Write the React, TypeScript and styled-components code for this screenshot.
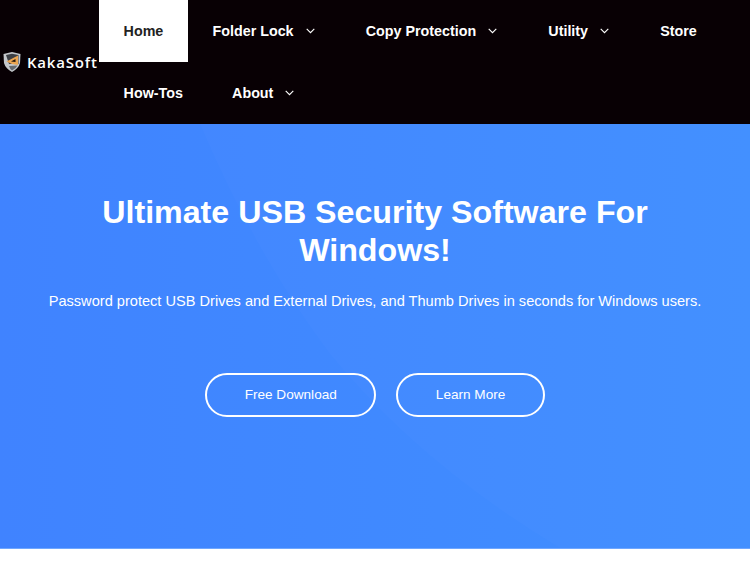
import * as React from "react";
import styled, { createGlobalStyle } from "styled-components";

const GlobalStyle = createGlobalStyle`
  html, body {
    margin: 0;
    padding: 0;
    background: #fff;
    font-family: "Liberation Sans", Arial, sans-serif;
  }
`;

const NAV_ITEMS = [
  { label: "Home", active: true },
  { label: "Folder Lock", caret: true },
  { label: "Copy Protection", caret: true },
  { label: "Utility", caret: true },
  { label: "Store" },
  { label: "How-Tos" },
  { label: "About", caret: true },
];

const Shield = () => (
  <svg width="18" height="20" viewBox="0 0 18 20">
    <path d="M9 0 L17.5 2 L17 11 Q15.5 16.5 9 20 Q2.5 16.5 1 11 L0.5 2 Z" fill="#c4c7cb" />
    <path d="M3 3 L9 1.8 L15.5 3 L15.5 12 L6 12 Z" fill="#3c3f45" />
    <path d="M15 3.5 L15 13 L9 12 L3.5 9.5 Z" fill="#eba551" />
    <path d="M12.5 7 L12.5 10 L8 9.5 Z" fill="#24160c" />
    <path d="M6 14 L14.5 13.5 Q13 16.5 9 18.5 Q7 17.2 6 14 Z" fill="#666a70" />
  </svg>
);

const Caret = () => (
  <svg width="9" height="6" viewBox="0 0 9 6">
    <path d="M0.7 0.9 L4.5 4.7 L8.3 0.9" fill="none" stroke="#fff" strokeWidth="1.1" />
  </svg>
);

export default function App() {
  return (
    <>
      <GlobalStyle />
      <Header>
        <Logo>
          <Shield />
          <LogoText>KakaSoft</LogoText>
        </Logo>
        <Nav>
          {NAV_ITEMS.map((item) => (
            <NavItem key={item.label} $active={item.active}>
              {item.label}
              {item.caret && (
                <CaretSlot>
                  <Caret />
                </CaretSlot>
              )}
            </NavItem>
          ))}
        </Nav>
      </Header>
      <Hero>
        <HeroShape viewBox="0 0 750 424" preserveAspectRatio="none">
          <path d="M200 0 Q255 130 330 230 Q420 340 560 424 L750 424 L750 0 Z" fill="#fff" fillOpacity="0.014" />
        </HeroShape>
        <Title>Ultimate USB Security Software For Windows!</Title>
        <Subtitle>
          Password protect USB Drives and External Drives, and Thumb Drives in seconds for Windows users.
        </Subtitle>
        <Buttons>
          <PillButton>Free Download</PillButton>
          <PillButton>Learn More</PillButton>
        </Buttons>
      </Hero>
    </>
  );
}

const Header = styled.header`
  display: flex;
  align-items: center;
  height: 124px;
  background: #080004;
`;

const Logo = styled.div`
  display: flex;
  flex: 0 0 99px;
  min-width: 0;
  align-items: center;
  gap: 6px;
  padding-left: 3px;
  box-sizing: border-box;
`;

const LogoText = styled.span`
  font-family: "Open Sans", sans-serif;
  font-size: 15px;
  font-weight: 600;
  letter-spacing: 0.8px;
  color: #fff;
  white-space: nowrap;
`;

const Nav = styled.nav`
  display: flex;
  flex-wrap: wrap;
  flex: 1;
`;

const NavItem = styled.a<{ $active?: boolean }>`
  display: flex;
  align-items: center;
  height: 62px;
  padding: 0 24.6px;
  font-size: 14.3px;
  font-weight: 700;
  color: ${(p) => (p.$active ? "#222" : "#fff")};
  background: ${(p) => (p.$active ? "#fff" : "transparent")};
  white-space: nowrap;
`;

const CaretSlot = styled.span`
  display: inline-flex;
  margin-left: 12px;
  margin-right: 2px;
`;

const Hero = styled.section`
  position: relative;
  display: flex;
  flex-direction: column;
  align-items: center;
  height: 425px;
  box-sizing: border-box;
  padding: 69px 30px 0;
  border-bottom: 1px solid #6fa7ff;
  background: linear-gradient(90deg, #4083ff 0%, #408fff 100%);
  color: #fff;
  text-align: center;
`;

const HeroShape = styled.svg`
  position: absolute;
  top: 0;
  left: 0;
  width: 100%;
  height: 100%;
`;

const Title = styled.h1`
  position: relative;
  margin: 0;
  font-size: 32.2px;
  line-height: 38px;
  font-weight: 700;
`;

const Subtitle = styled.p`
  position: relative;
  margin: 20px 0 0;
  font-size: 14.6px;
  line-height: 24px;
  white-space: nowrap;
`;

const Buttons = styled.div`
  position: relative;
  display: flex;
  gap: 20px;
  margin-top: 60px;
`;

const PillButton = styled.a`
  display: flex;
  align-items: center;
  height: 44px;
  padding: 0 37.5px 2px;
  border: 2px solid #fff;
  box-sizing: border-box;
  border-radius: 22px;
  font-size: 13.6px;
  color: #fff;
`;
